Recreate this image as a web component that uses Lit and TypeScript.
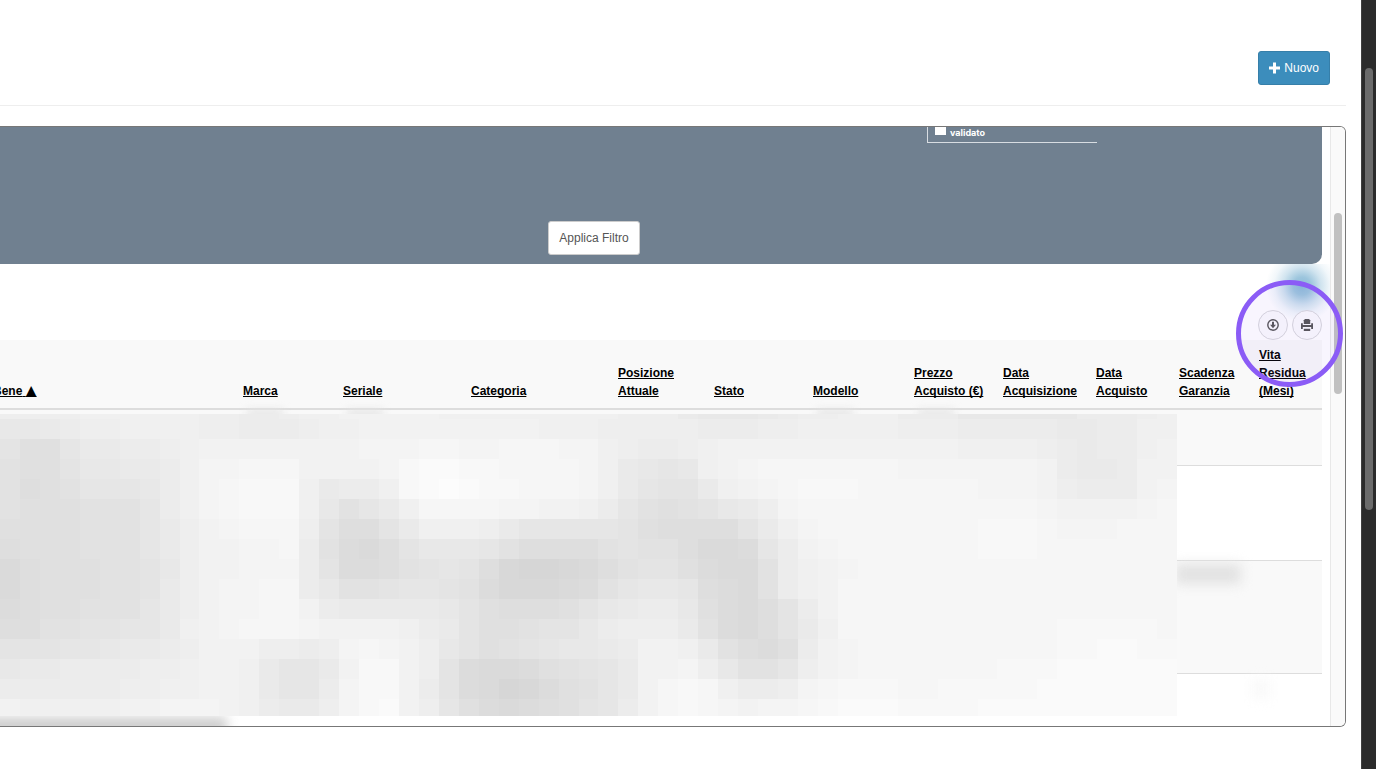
import { LitElement, html, css } from "lit";
import { customElement } from "lit/decorators.js";

interface Column {
  lines: string[];
  width: number;
  sorted?: boolean;
}

const COLUMNS: Column[] = [
  { lines: ["Bene"], width: 369, sorted: true },
  { lines: ["Marca"], width: 100 },
  { lines: ["Seriale"], width: 128 },
  { lines: ["Categoria"], width: 147 },
  { lines: ["Posizione", "Attuale"], width: 96 },
  { lines: ["Stato"], width: 99 },
  { lines: ["Modello"], width: 101 },
  { lines: ["Prezzo", "Acquisto (€)"], width: 89 },
  { lines: ["Data", "Acquisizione"], width: 93 },
  { lines: ["Data", "Acquisto"], width: 83 },
  { lines: ["Scadenza", "Garanzia"], width: 80 },
  { lines: ["Vita", "Residua", "(Mesi)"], width: 71 },
];

const TOTAL = COLUMNS.reduce((sum, c) => sum + c.width, 0);

// Privacy mosaic: one character per tile, base 36, a higher digit is darker.
const MOSAIC = [
  "7777666666778876655555" + "6666666667779aaa9877666" + "888aaaaaa88876",
  "aa98776666778887665555" + "55555666777778887766666" + "77788888998866",
  "ceeb998876555555554443" + "34433344678876555555555" + "55566667898865",
  "deecaa9986443335555421" + "1223333469aba6543333333" + "44444445899855",
  "dfedbbba86432226988621" + "0122333469bcc9654322233" + "33334445788854",
  "deeedddb86432226adb963" + "333445568bdedca97433333" + "33333334555543",
  "eeeedddb97543337cffc96" + "6679bbbbbceffffc9643333" + "33332223444333",
  "feeedddb97554438dghfca" + "aabdffffdcddfhhgb854333" + "33332223333333",
  "hfeeeddca7554448cggfdc" + "bcfijjihfdcceghhd865433" + "33333333333333",
  "hfeeeddc97544338addcbb" + "cdgiiihgdbaabfghd865333" + "33333333333333",
  "gfeedddb97544335899999" + "acefffeca988aeghfc85333" + "33333333333333",
  "ffddccbb96543334555568" + "9ceedcca87779dghfc96333" + "33333333222223",
  "cccbba9987555778743457" + "acedcbaa985569dfge85433" + "33333333221122",
  "a9988887765569bb952257" + "cghhgedcb95547addb75433" + "33333222111111",
  "88888877665569bb842258" + "cghjigedb95323688743222" + "33222221111111",
  "5666665544456899742157" + "beghgfecb85323454432111" + "22221111111111",
];

const gray = (digit: string) => {
  const v = 252 - 2 * parseInt(digit, 36);
  return `rgb(${v},${v},${v})`;
};

@customElement("app-root")
export class AppRoot extends LitElement {
  static styles = css`
    :host {
      display: flex;
      height: 100vh;
      overflow: hidden;
      background: #fff;
      font-family: "Liberation Sans", Arial, sans-serif;
      font-size: 12px;
      line-height: 18px;
      color: #000;
    }
    * {
      box-sizing: border-box;
    }
    main {
      flex: 1;
      min-width: 0;
      display: flex;
      flex-direction: column;
      padding: 0 15px 42px 0;
    }
    header {
      flex: none;
      display: flex;
      justify-content: flex-end;
      padding: 51px 16px 20px;
      border-bottom: 1px solid #eee;
      margin-bottom: 20px;
    }
    button {
      font: inherit;
      cursor: pointer;
    }
    .btn {
      display: flex;
      align-items: center;
      gap: 4px;
      height: 34px;
      padding: 0 10px;
      border: 1px solid #ccc;
      border-radius: 3px;
      background: #fff;
      color: #555;
    }
    .btn.primary {
      background: #3c8dbc;
      border-color: #367fa9;
      color: #fff;
    }
    .panel {
      position: relative;
      flex: 1;
      min-height: 0;
      display: flex;
      border: 1px solid #777;
      border-left: 0;
      border-radius: 0 6px 6px 0;
      overflow: hidden;
    }
    .view {
      flex: 1;
      min-width: 0;
      overflow: hidden;
      padding-right: 8px;
    }
    .content {
      position: relative;
      margin-left: -134px;
    }
    .filter {
      display: flex;
      flex-direction: column;
      align-items: center;
      gap: 78px;
      padding-bottom: 9px;
      background: #708090;
      border-radius: 0 0 10px 10px;
    }
    .group {
      align-self: flex-end;
      display: flex;
      align-items: flex-end;
      width: 170px;
      height: 16px;
      margin-right: 225px;
      padding: 0 7px;
      border: solid #d8dde2;
      border-width: 0 0 1px 1px;
    }
    .check {
      display: flex;
      align-items: flex-end;
      gap: 4px;
      font: bold 9px/18px Inter, sans-serif;
      color: #fff;
    }
    .check input {
      appearance: none;
      width: 11px;
      height: 11px;
      margin: 0 0 7px;
      background: #fff;
    }
    .tools {
      position: relative;
      display: flex;
      justify-content: flex-end;
      align-items: flex-end;
      gap: 4px;
      height: 76px;
    }
    .glow {
      position: absolute;
      top: -14px;
      right: -16px;
      width: 72px;
      height: 72px;
      background: radial-gradient(
        circle,
        rgba(60, 141, 188, 0.6) 0,
        rgba(60, 141, 188, 0.5) 9px,
        rgba(60, 141, 188, 0.24) 19px,
        rgba(60, 141, 188, 0.07) 28px,
        rgba(60, 141, 188, 0) 36px
      );
      clip-path: inset(14px 0 0 0);
    }
    .round {
      position: relative;
      display: flex;
      align-items: center;
      justify-content: center;
      width: 30px;
      height: 30px;
      padding: 0;
      border: 1px solid #d8d8dc;
      border-radius: 50%;
      background: #fbfbfd;
      color: #555;
    }
    table {
      width: 100%;
      table-layout: fixed;
      border-collapse: separate;
      border-spacing: 0;
    }
    th {
      padding: 6px 0 8px 8px;
      border-bottom: 2px solid #ddd;
      background: #f9f9f9;
      text-align: left;
      vertical-align: bottom;
      white-space: nowrap;
    }
    th:first-child {
      padding-left: 127px;
    }
    th a {
      color: #000;
      text-decoration: underline;
      text-decoration-skip-ink: none;
    }
    .arrow {
      font: 14px/1 "DejaVu Sans", sans-serif;
    }
    td {
      padding: 0;
      border-bottom: 1px solid #ddd;
      vertical-align: top;
    }
    tr:nth-child(odd) td {
      background: #f9f9f9;
    }
    .short td {
      height: 56px;
    }
    .medium td {
      height: 95px;
    }
    .tall td {
      height: 113px;
    }
    .smudge {
      display: block;
      height: 20px;
      margin: 3px 10px 0 4px;
      background: #e2e2e2;
      filter: blur(6px);
    }
    .smudge.faint {
      width: 20px;
      margin: 5px 0 0;
      background: #fafafa;
    }
    .smudge.top {
      width: 36px;
      height: 8px;
      margin: 0 12px;
      background: #e4e4e4;
      filter: blur(4px);
    }
    .smudge.low {
      height: 20px;
      margin: 43px 8px 0 0;
      background: #cecece;
    }
    .mosaic {
      position: absolute;
      top: 287px;
      left: 134px;
      right: 145px;
      display: grid;
      grid-template-columns: repeat(59, 1fr);
      grid-template-rows: 5px repeat(14, 20px) 17px;
    }
    .track {
      flex: none;
      width: 15px;
      padding: 86px 2px 0 3px;
      border-left: 1px solid #e8e8e8;
      background: #fafafa;
    }
    .thumb {
      width: 8px;
      height: 181px;
      border-radius: 4px;
      background: #c1c1c1;
    }
    .track.dark {
      padding: 68px 3px 0;
      border-color: #404040;
      background: #2b2b2b;
    }
    .dark .thumb {
      height: 442px;
      background: #6b6b6b;
    }
    .highlight {
      position: absolute;
      top: 153px;
      right: 2px;
      width: 107px;
      height: 107px;
      border: 5px solid #8b5cf6;
      border-radius: 50%;
      background: rgba(139, 92, 246, 0.06);
      pointer-events: none;
    }
  `;

  private smudge(row: number, col: number) {
    if (row === 0 && [1, 2, 6, 7].includes(col)) return html`<span class="smudge top"></span>`;
    if (row === 2 && col === 10) return html`<span class="smudge"></span>`;
    if (row === 3 && col === 11) return html`<span class="smudge faint"></span>`;
    if (row === 3 && col === 0) return html`<span class="smudge low"></span>`;
    return "";
  }

  render() {
    return html`
      <main>
        <header>
          <button class="btn primary">
            <svg width="11" height="12" viewBox="0 0 11 12" fill="currentColor">
              <path d="M4 .5h3V4.500h4v3H7v4H4v-4H0v-3h4z" />
            </svg>
            Nuovo
          </button>
        </header>
        <section class="panel">
          <div class="view">
            <div class="content">
              <form class="filter" @submit=${(e: Event) => e.preventDefault()}>
                <div class="group">
                  <label class="check"><input type="checkbox" />validato</label>
                </div>
                <button class="btn">Applica Filtro</button>
              </form>
              <div class="tools">
                <div class="glow"></div>
                <button class="round" aria-label="Scarica">
                  <svg width="12" height="12" viewBox="0 0 12 12" fill="none" stroke="currentColor">
                    <circle cx="6" cy="6" r="5.200" stroke-width="1.400" />
                    <path d="M5 2.800h2v3h2L6 9.200 3 5.800h2z" fill="currentColor" stroke="none" />
                  </svg>
                </button>
                <button class="round" aria-label="Stampa">
                  <svg width="12" height="12" viewBox="0 0 12 12" fill="currentColor">
                    <path d="M4 0h4l1.200 1.200V5H2.800V1.200z" />
                    <path d="M0 4.300h1.800V6h8.400V4.300H12V10h-1.800V8H1.800v2H0z" />
                    <path d="M2.800 9.800h6.400V12H2.800z" />
                  </svg>
                </button>
              </div>
              <table>
                <colgroup>
                  ${COLUMNS.map((c) => html`<col style="width:${(c.width / TOTAL) * 100}%" />`)}
                </colgroup>
                <thead>
                  <tr>
                    ${COLUMNS.map(
                      (c) => html`<th scope="col">
                        <a href="#"
                          >${c.lines.map((l, i) => (i ? html`<br />${l}` : l))}${c.sorted
                            ? html` <span class="arrow">▲</span>`
                            : ""}</a
                        >
                      </th>`
                    )}
                  </tr>
                </thead>
                <tbody>
                  ${["short", "medium", "tall", "tall"].map(
                    (size, row) => html`<tr class=${size}>
                      ${COLUMNS.map((_, col) => html`<td>${this.smudge(row, col)}</td>`)}
                    </tr>`
                  )}
                </tbody>
              </table>
              <div class="mosaic" aria-hidden="true">
                ${MOSAIC.map((line) => [...line].map((d) => html`<i style="background:${gray(d)}"></i>`))}
              </div>
            </div>
          </div>
          <div class="track"><div class="thumb"></div></div>
          <div class="highlight"></div>
        </section>
      </main>
      <div class="track dark"><div class="thumb"></div></div>
    `;
  }
}
